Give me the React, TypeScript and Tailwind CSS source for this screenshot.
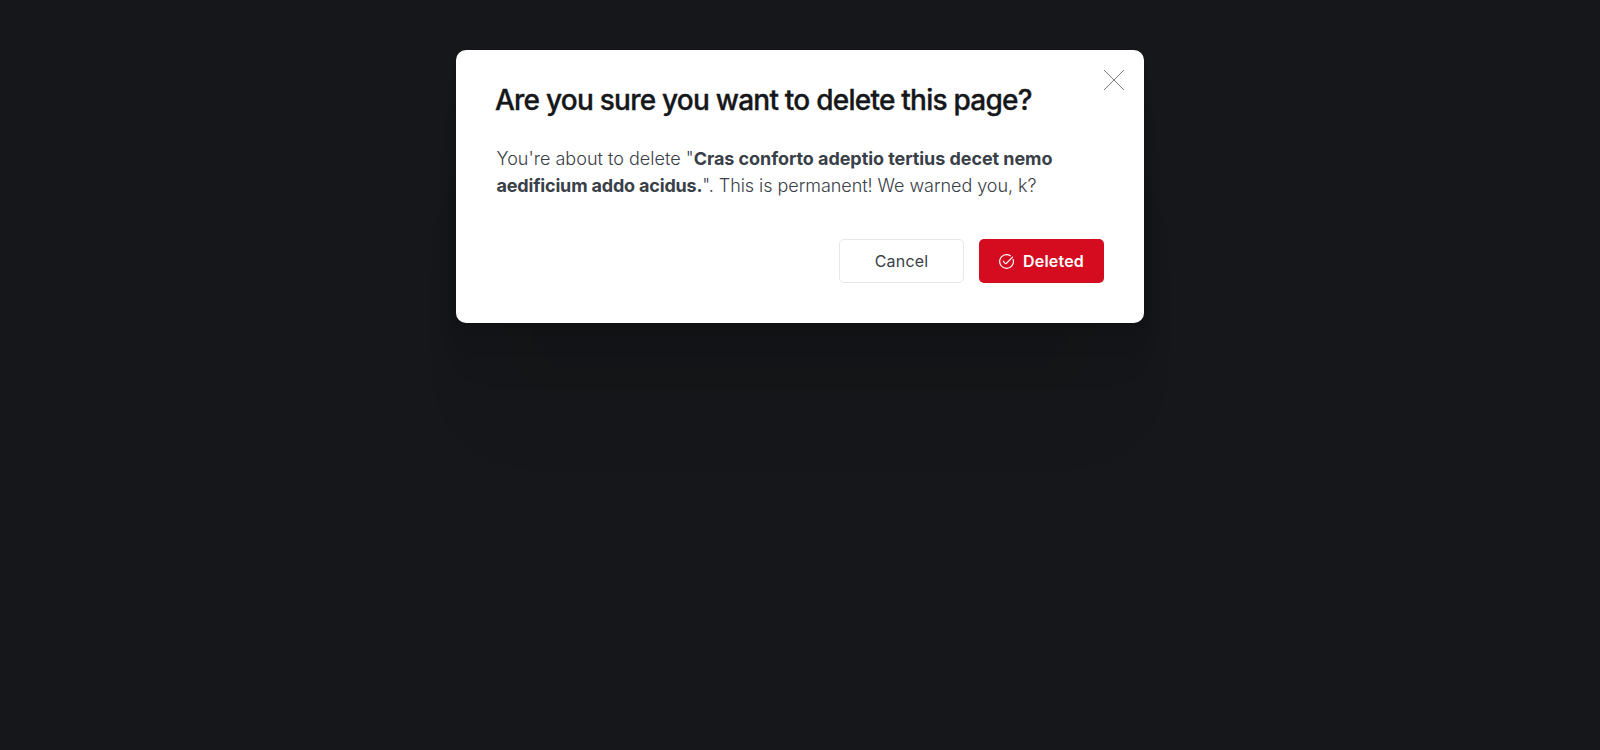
export default function App() {
  return (
    <div className="flex min-h-[750px] items-start justify-center bg-[#15171a] pt-[50px] font-['Inter','Liberation_Sans',sans-serif]">
      <section className="relative h-[273px] w-[688px] rounded-[10px] bg-white px-10 pt-[33px] shadow-[0_3px_3px_rgba(0,0,0,0.03),0_8px_8px_rgba(0,0,0,0.04),0_24px_20px_-4px_rgba(0,0,0,0.04),0_50px_40px_-14px_rgba(0,0,0,0.05),0_122px_70px_-26px_rgba(0,0,0,0.05)]">
        <h1 className="-ml-px text-[28px] leading-[34px] font-medium tracking-[-0.765px] text-[#15171a] [-webkit-text-stroke:0.35px_#15171a]">Are you sure you want to delete this page?</h1>
        <button aria-label="Close" className="absolute top-5 right-[20px] flex h-5 w-5 items-center justify-center">
          <svg className="h-5 w-5" viewBox="0 0 20 20" fill="none" stroke="#75777a" strokeLinecap="round" strokeWidth="0.95"><path d="M.3 19.7L19.7.3M19.7 19.7L.3.3" /></svg>
        </button>
        <p className="mt-[28px] pl-[0.5px] text-[18px] leading-[27px] font-light tracking-[-0.05px] text-[#394047]">
          <span className="tracking-[0.02px]">You're about to delete "</span><strong className="font-bold tracking-[-0.065px]">Cras conforto adeptio tertius decet nemo <span className="tracking-[-0.18px]">aedificium addo acidus.</span></strong>". This is permanent! We warned you, k?
        </p>
        <footer className="mt-[40px] flex justify-end gap-[15px]">
          <button className="h-11 w-[125px] rounded-[5px] border border-[#e6e7e8] text-[16px] tracking-[0.2px] text-[#394047]">Cancel</button>
          <button className="flex h-11 w-[125px] items-center justify-center gap-[9px] rounded-[5px] bg-[#d50b20] text-[16px] font-semibold tracking-[0.2px] text-white">
            <svg className="h-[15px] w-[15px] overflow-visible" viewBox="0 0 24 24" fill="none" stroke="currentColor" strokeWidth="1.9" strokeLinecap="round" strokeLinejoin="round"><path d="M6.8 11.5l3 3.7a1.1 1.1 0 0 0 1.7 0L21.8 5M22.6 8.8A11 11 0 1 1 18.2 2.8" /></svg>
            Deleted
          </button>
        </footer>
      </section>
    </div>
  );
}
